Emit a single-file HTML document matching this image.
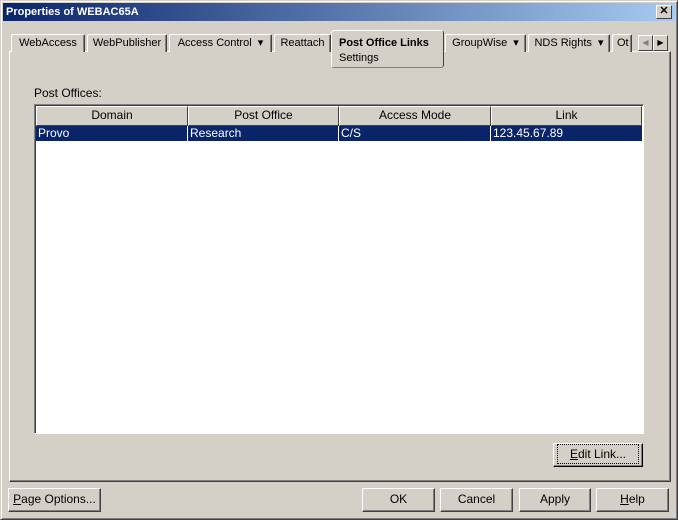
<!DOCTYPE html>
<html><head><style>
*{box-sizing:border-box;margin:0;padding:0}
body{width:678px;height:520px;background:#d4d0c8;font-family:"Liberation Sans",Arial,sans-serif;font-size:11px;position:relative;overflow:hidden;color:#000}
.a{position:absolute}
.win{left:0;top:0;width:678px;height:520px;border:1px solid;border-color:#d4d0c8 #404040 #404040 #d4d0c8;box-shadow:inset 1px 1px 0 #fff,inset -1px -1px 0 #808080}
.title{left:3px;top:3px;width:672px;height:18px;background:linear-gradient(90deg,#0a246a,#a6caf0);color:#fff;font-weight:bold;font-size:11px;line-height:18px;padding-left:3px}
.xb{left:656px;top:5px;width:16px;height:14px;background:#d4d0c8;border:1px solid;border-color:#fff #404040 #404040 #fff;font-size:11px;line-height:11px;text-align:center;font-weight:bold;color:#000}
.panel{left:9px;top:51px;width:662px;height:431px;border:1px solid;border-color:#fff #404040 #404040 #fff;box-shadow:inset -1px -1px 0 #808080}
.tab{top:34px;height:18px;border:1px solid;border-bottom:none;border-color:#fff #404040 #404040 #fff;border-radius:2px 2px 0 0;line-height:17px;text-align:center;background:#d4d0c8;box-shadow:inset -1px 0 0 #808080}
.sel{left:331px;top:30px;width:113px;height:38px;border:1px solid;border-top-color:#fff;border-left-color:#fff;border-right-color:#404040;border-bottom-color:#808080;border-radius:3px;background:#d4d0c8;padding:5px 0 0 7px;line-height:15px}
.tbl{left:34px;top:104px;width:610px;height:330px;background:#fff;border:1px solid;border-color:#808080 #fff #fff #808080;box-shadow:inset 1px 1px 0 #404040}
.h{top:106px;height:20px;background:#d4d0c8;border:1px solid;border-color:#fff #404040 #404040 #fff;text-align:center;line-height:17px;font-size:12px}
.r{top:126px;height:15px;background:#0a246a;color:#fff;line-height:15px;font-size:12px;padding-left:2px;border-right:1px solid #fff}
.btn{height:24px;border:1px solid;border-color:#fff #404040 #404040 #fff;box-shadow:inset -1px -1px 0 #808080;text-align:center;line-height:21px;font-size:12px;background:#d4d0c8}
u{text-decoration:underline}
.arr{top:35px;width:15px;height:16px;border:1px solid;border-color:#fff #404040 #404040 #fff;background:#d4d0c8}
</style></head><body>
<div class="a win"></div>
<div class="a title">Properties of WEBAC65A</div>
<div class="a xb">✕</div>
<div class="a panel"></div>
<div class="a tab" style="left:11px;width:74px">WebAccess</div>
<div class="a tab" style="left:87px;width:80px">WebPublisher</div>
<div class="a tab" style="left:169px;width:103px">Access Control &nbsp;▾</div>
<div class="a tab" style="left:274px;width:57px">Reattach</div>
<div class="a tab" style="left:445px;width:81px">GroupWise &nbsp;▾</div>
<div class="a tab" style="left:528px;width:82px">NDS Rights &nbsp;▾</div>
<div class="a tab" style="left:612px;width:20px;overflow:hidden;text-align:left;padding-left:4px">Ot</div>
<div class="a arr" style="left:638px;color:#808080;font-size:8px;line-height:14px;text-align:center">◀</div>
<div class="a arr" style="left:653px;font-size:8px;line-height:14px;text-align:center">▶</div>
<div class="a sel"><b style="font-size:11px">Post Office Links</b><br>Settings</div>
<div class="a" style="left:34px;top:86px;font-size:12px">Post Offices:</div>
<div class="a tbl"></div>
<div class="a h" style="left:36px;width:152px">Domain</div>
<div class="a h" style="left:188px;width:151px">Post Office</div>
<div class="a h" style="left:339px;width:152px">Access Mode</div>
<div class="a h" style="left:491px;width:151px">Link</div>
<div class="a r" style="left:36px;width:152px">Provo</div>
<div class="a r" style="left:188px;width:151px">Research</div>
<div class="a r" style="left:339px;width:152px">C/S</div>
<div class="a r" style="left:491px;width:151px;border-right:none">123.45.67.89</div>
<div class="a btn" style="left:553px;top:443px;width:90px;border-color:#fff #000 #000 #fff"><span style="outline:1px dotted #000;padding:2px 12px"><u>E</u>dit Link...</span></div>
<div class="a btn" style="left:8px;top:488px;width:93px"><u>P</u>age Options...</div>
<div class="a btn" style="left:362px;top:488px;width:73px">OK</div>
<div class="a btn" style="left:440px;top:488px;width:73px">Cancel</div>
<div class="a btn" style="left:519px;top:488px;width:72px">Apply</div>
<div class="a btn" style="left:596px;top:488px;width:73px"><u>H</u>elp</div>
</body></html>
